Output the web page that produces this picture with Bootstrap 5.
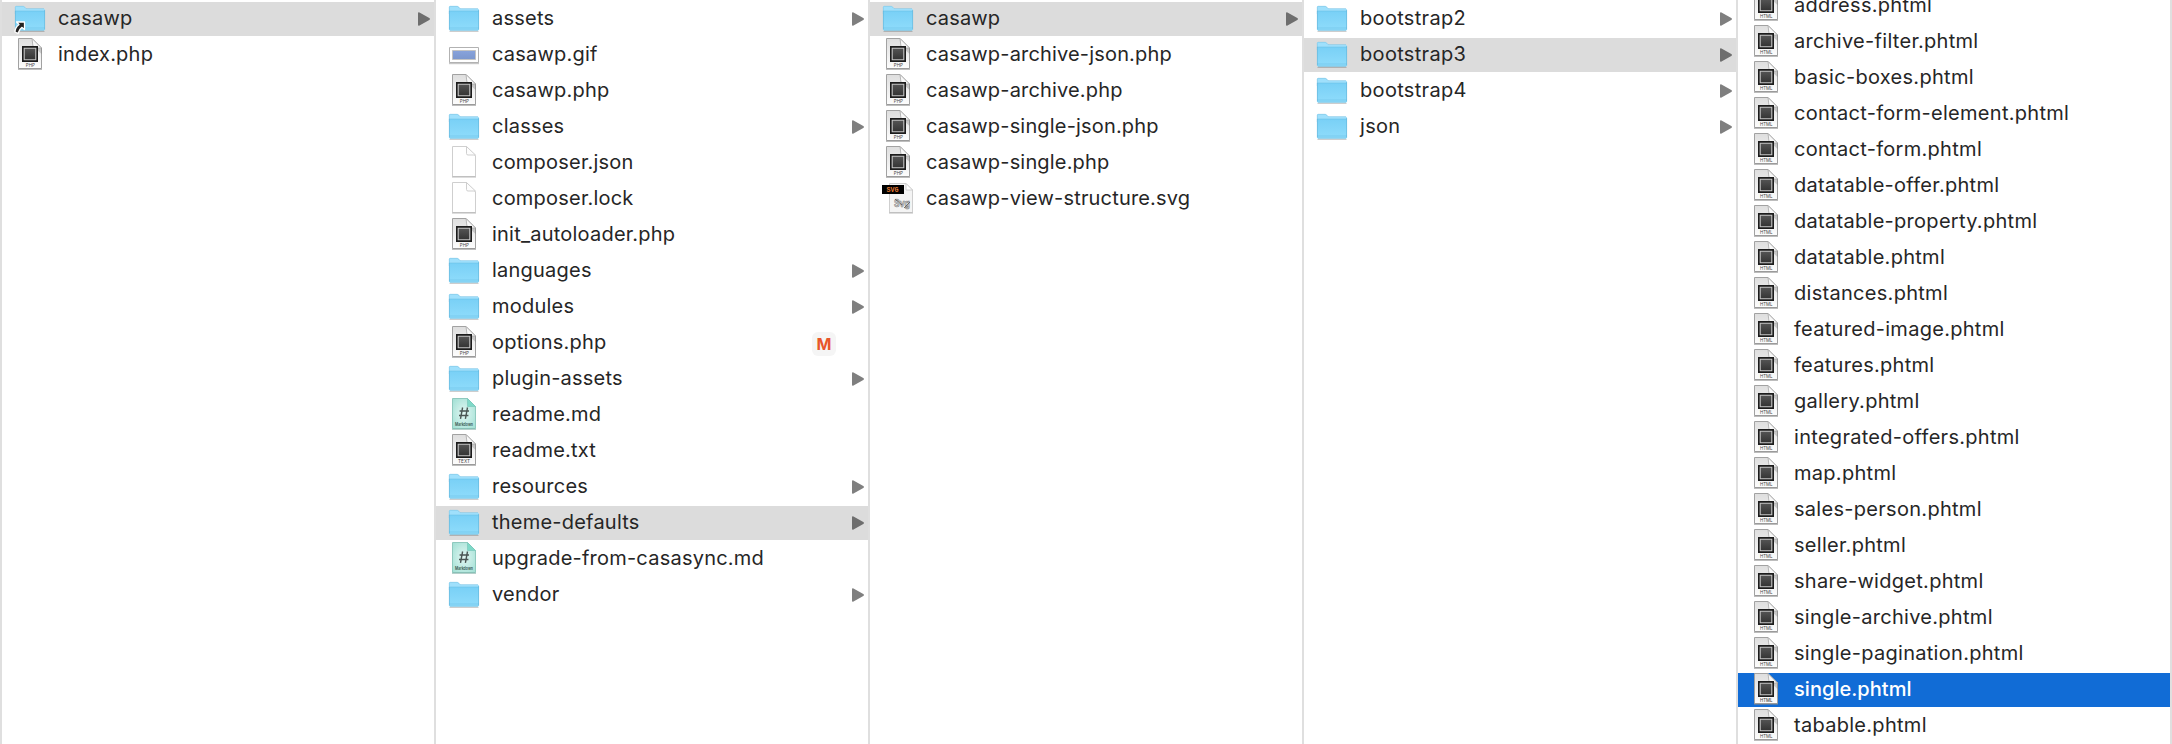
<!DOCTYPE html>
<html lang="en">
<head>
<meta charset="utf-8">
<meta name="viewport" content="width=device-width, initial-scale=1">
<title>casawp</title>
<link href="https://cdn.jsdelivr.net/npm/bootstrap@5.3.0/dist/css/bootstrap.min.css" rel="stylesheet">
<style>
  body { font-family: Inter, "Liberation Sans", sans-serif; font-size: 20px; color: #262626; background: #fff; }
  .browser { height: 744px; width: 2172px; }
  .pane { --track: .22px; width: 434px; border-left: 2px solid #dfdfdf; padding-top: 2px; display: flex; flex-direction: column; gap: 2px; flex: none; }
  .pane.templates { --track: .17px; }
  .pane.versions { --track: .32px; }
  .pane.scrolled { --track: .29px; margin-top: -13px; }
  .pane-end { width: 2px; background: #dfdfdf; }
  .entry { height: 34px; flex: none; display: flex; align-items: center; padding: 0 4px 0 11px; line-height: 32px; letter-spacing: var(--track); white-space: nowrap; }
  .entry > svg:first-child { width: 34px; height: 34px; flex: none; margin-right: 11px; overflow: visible; }
  .entry span { padding-bottom: 2px; }
  .entry .arr { width: 12px; height: 14px; margin-left: auto; flex: none; fill: #7f7f7f; }
  .entry.open { background: #dcdcdc; }
  .entry.open .arr { fill: #6e6e6e; }
  .entry.chosen { background: #116cd6; color: #fff; font-weight: 500; letter-spacing: .04px; }
  .entry .status { width: 24px; height: 24px; line-height: 24px; padding: 0; margin: 2px 28px 0 auto; border-radius: 6px; background: #f5f5f5; color: #e8562a; font-size: 16px; font-weight: 700; letter-spacing: 0; text-align: center; }
</style>
</head>
<body class="overflow-hidden">
<svg width="0" height="0" class="position-absolute" aria-hidden="true">
  <defs>
    <linearGradient id="gFolder" x1="0" y1="0" x2="0" y2="1"><stop offset="0" stop-color="#79d0f6"/><stop offset="1" stop-color="#8fdcfb"/></linearGradient>
    <linearGradient id="gPage" x1="0" y1="0" x2="0" y2="1"><stop offset="0" stop-color="#dedede"/><stop offset="1" stop-color="#fdfdfd"/></linearGradient>
    <linearGradient id="gChip" x1="0" y1="0" x2="0" y2="1"><stop offset="0" stop-color="#555"/><stop offset="1" stop-color="#333"/></linearGradient>
    <linearGradient id="gFold" x1="0" y1="1" x2="1" y2="0"><stop offset="0" stop-color="#fff"/><stop offset=".55" stop-color="#f4f4f4"/><stop offset="1" stop-color="#bbb"/></linearGradient>
    <radialGradient id="gMd" cx=".5" cy=".5" r=".7"><stop offset="0" stop-color="#e2f7f3"/><stop offset="1" stop-color="#9fdfd3"/></radialGradient>
    <linearGradient id="gImg" x1="0" y1="0" x2="0" y2="1"><stop offset="0" stop-color="#88a3dc"/><stop offset="1" stop-color="#7c97cd"/></linearGradient>
    <symbol id="folder" viewBox="0 0 34 34">
      <path d="M2.500 29.400h29" stroke="#000" stroke-opacity=".22" stroke-width="1"/>
      <path d="M2 5.200Q2 4 3.200 4H10q1 0 1.800.8l1.100 1.400q.5.6 1.500.6h16.400q1.200 0 1.200 1.200V12H2z" fill="#9fe0fc"/>
      <path d="M2.300 12V5.300Q2.300 4.300 3.300 4.300H10q.9 0 1.600.8L13 6.600h18" fill="none" stroke="#7fc5e4" stroke-width=".6"/>
      <path d="M2 9h30v18.300q0 1.200-1.200 1.200H3.200Q2 28.500 2 27.300z" fill="url(#gFolder)"/>
      <path d="M2 9h30M2 26h30" stroke="#61b9df" stroke-width=".7" opacity=".6"/>
      <path d="M2.400 9v18.500M31.600 8v19.500M3 28.200h28" stroke="#62b4d8" stroke-width=".8" opacity=".75"/>
    </symbol>
    <symbol id="page" viewBox="0 0 34 34">
      <path d="M5.500.5H19L28.500 10V30.500H5.500z" fill="url(#gPage)" stroke="#a2a2a2"/>
      <path d="M5 31.200h24" stroke="#888" stroke-width=".8"/>
      <path d="M20.500 8.500 28.500 10V16z" fill="#000" opacity=".15"/>
      <path d="M19 .5L28.500 10H22q-2-.5-2.200-3z" fill="url(#gFold)" stroke="#a8a8a8" stroke-width=".8"/>
      <path d="M9 8h16v16H9z" fill="#1c1c1c"/>
      <path d="M11.200 10.200h11.600v11.600H11.200z" fill="url(#gChip)" stroke="#c6c6c6" stroke-width="1.100"/>
    </symbol>
    <symbol id="php" viewBox="0 0 34 34"><use href="#page"/><text x="17.300" y="28.600" font-size="5.200" letter-spacing="0" text-anchor="middle" textLength="9" lengthAdjust="spacingAndGlyphs" fill="#444">PHP</text></symbol>
    <symbol id="txt" viewBox="0 0 34 34"><use href="#page"/><text x="17" y="28.600" font-size="5.200" letter-spacing="0" text-anchor="middle" textLength="12" lengthAdjust="spacingAndGlyphs" fill="#444">TEXT</text></symbol>
    <symbol id="html" viewBox="0 0 34 34"><use href="#page"/><text x="17.300" y="28.600" font-size="5.200" letter-spacing="0" text-anchor="middle" textLength="12.500" lengthAdjust="spacingAndGlyphs" fill="#444">HTML</text></symbol>
    <symbol id="md" viewBox="0 0 34 34">
      <path d="M5.500.5H20.500L28.500 8.500V30.500H5.500z" fill="url(#gMd)" stroke="#8fc9be"/>
      <path d="M5 31.200h24" stroke="#79aaa1" stroke-width=".8"/>
      <path d="M20.500.5v8h8z" fill="#7fd9c8" stroke="#75c5b7" stroke-width=".6"/>
      <path d="M15.600 9.500l-2.100 11.400M20.500 9.500l-2.100 11.400M12.600 13h9.400M12 17.500h9.400" stroke="#4b5654" stroke-width="1.400" fill="none"/>
      <text x="17" y="28.400" font-size="4.600" letter-spacing="0" font-weight="600" text-anchor="middle" textLength="18" lengthAdjust="spacingAndGlyphs" fill="#34524d">Markdown</text>
    </symbol>
    <symbol id="blank" viewBox="0 0 34 34">
      <path d="M5.500.5H19.500L28.500 10V30.500H5.500z" fill="#fff" stroke="#cfcfcf"/>
      <path d="M5 31h24" stroke="#aaa" stroke-width=".8"/>
      <path d="M19.500.5v7q0 1.500 1.500 1.500h7.500z" fill="#fdfdfd" stroke="#cacaca" stroke-width=".9"/>
    </symbol>
    <symbol id="gif" viewBox="0 0 34 34">
      <path d="M2 25.200h30" stroke="#000" stroke-opacity=".22" stroke-width="2"/>
      <path d="M2.500 9.500h29v15h-29z" fill="#fff" stroke="#b2b2b2"/>
      <path d="M5.500 12.500h23v9h-23z" fill="url(#gImg)" stroke="#c3c3c3"/>
    </symbol>
    <symbol id="svgdoc" viewBox="0 0 34 34">
      <path d="M8.500 1.500H25L31.500 8V30.500H8.500z" fill="#f4f4f4" stroke="#cfcfcf"/>
      <path d="M8 31h24" stroke="#aaa" stroke-width=".8"/>
      <path d="M25 1.500V8h6.500z" fill="#fff" stroke="#c5c5c5" stroke-width=".8"/>
      <text x="21" y="24.500" font-size="10" letter-spacing="0" font-weight="700" text-anchor="middle" textLength="16" lengthAdjust="spacingAndGlyphs" fill="#ccc" stroke="#777" stroke-width=".5">Svg</text>
      <path d="M14 17l7 6M23 26l6-6" stroke="#555" stroke-width=".8"/>
      <path d="M1 3h22v9H1z" fill="#000"/>
      <text x="11.500" y="9.900" font-size="7" letter-spacing="0" font-family="Liberation Mono, monospace" font-weight="700" text-anchor="middle" textLength="12" lengthAdjust="spacingAndGlyphs" fill="#e07a35">SVG</text>
    </symbol>
    <symbol id="alias" viewBox="0 0 34 34">
      <use href="#folder"/>
      <path d="M3.500 20H11.500V27.500L9 25.400Q6 27.500 5 31.500L2 30Q2 25.500 6 22.500z" fill="#222" stroke="#fff" stroke-width="1.300" stroke-linejoin="round"/>
    </symbol>
    <symbol id="tri" viewBox="0 0 12 14"><path d="M0 1.200Q0-.3 1.500.4L11.300 6.100Q12.600 7 11.300 7.900L1.500 13.600Q0 14.300 0 12.800z"/></symbol>
  </defs>
</svg>

<main class="browser d-flex overflow-hidden">
  <section class="pane">
    <div class="entry open"><svg><use href="#alias"/></svg><span>casawp</span><svg class="arr"><use href="#tri"/></svg></div>
    <div class="entry"><svg><use href="#php"/></svg><span>index.php</span></div>
  </section>

  <section class="pane">
    <div class="entry"><svg><use href="#folder"/></svg><span>assets</span><svg class="arr"><use href="#tri"/></svg></div>
    <div class="entry"><svg><use href="#gif"/></svg><span>casawp.gif</span></div>
    <div class="entry"><svg><use href="#php"/></svg><span>casawp.php</span></div>
    <div class="entry"><svg><use href="#folder"/></svg><span>classes</span><svg class="arr"><use href="#tri"/></svg></div>
    <div class="entry"><svg><use href="#blank"/></svg><span>composer.json</span></div>
    <div class="entry"><svg><use href="#blank"/></svg><span>composer.lock</span></div>
    <div class="entry"><svg><use href="#php"/></svg><span>init_autoloader.php</span></div>
    <div class="entry"><svg><use href="#folder"/></svg><span>languages</span><svg class="arr"><use href="#tri"/></svg></div>
    <div class="entry"><svg><use href="#folder"/></svg><span>modules</span><svg class="arr"><use href="#tri"/></svg></div>
    <div class="entry"><svg><use href="#php"/></svg><span>options.php</span><span class="status">M</span></div>
    <div class="entry"><svg><use href="#folder"/></svg><span>plugin-assets</span><svg class="arr"><use href="#tri"/></svg></div>
    <div class="entry"><svg><use href="#md"/></svg><span>readme.md</span></div>
    <div class="entry"><svg><use href="#txt"/></svg><span>readme.txt</span></div>
    <div class="entry"><svg><use href="#folder"/></svg><span>resources</span><svg class="arr"><use href="#tri"/></svg></div>
    <div class="entry open"><svg><use href="#folder"/></svg><span>theme-defaults</span><svg class="arr"><use href="#tri"/></svg></div>
    <div class="entry"><svg><use href="#md"/></svg><span>upgrade-from-casasync.md</span></div>
    <div class="entry"><svg><use href="#folder"/></svg><span>vendor</span><svg class="arr"><use href="#tri"/></svg></div>
  </section>

  <section class="pane templates">
    <div class="entry open"><svg><use href="#folder"/></svg><span>casawp</span><svg class="arr"><use href="#tri"/></svg></div>
    <div class="entry"><svg><use href="#php"/></svg><span>casawp-archive-json.php</span></div>
    <div class="entry"><svg><use href="#php"/></svg><span>casawp-archive.php</span></div>
    <div class="entry"><svg><use href="#php"/></svg><span>casawp-single-json.php</span></div>
    <div class="entry"><svg><use href="#php"/></svg><span>casawp-single.php</span></div>
    <div class="entry"><svg><use href="#svgdoc"/></svg><span>casawp-view-structure.svg</span></div>
  </section>

  <section class="pane versions">
    <div class="entry"><svg><use href="#folder"/></svg><span>bootstrap2</span><svg class="arr"><use href="#tri"/></svg></div>
    <div class="entry open"><svg><use href="#folder"/></svg><span>bootstrap3</span><svg class="arr"><use href="#tri"/></svg></div>
    <div class="entry"><svg><use href="#folder"/></svg><span>bootstrap4</span><svg class="arr"><use href="#tri"/></svg></div>
    <div class="entry"><svg><use href="#folder"/></svg><span>json</span><svg class="arr"><use href="#tri"/></svg></div>
  </section>

  <section class="pane scrolled">
    <div class="entry"><svg><use href="#html"/></svg><span>address.phtml</span></div>
    <div class="entry"><svg><use href="#html"/></svg><span>archive-filter.phtml</span></div>
    <div class="entry"><svg><use href="#html"/></svg><span>basic-boxes.phtml</span></div>
    <div class="entry"><svg><use href="#html"/></svg><span>contact-form-element.phtml</span></div>
    <div class="entry"><svg><use href="#html"/></svg><span>contact-form.phtml</span></div>
    <div class="entry"><svg><use href="#html"/></svg><span>datatable-offer.phtml</span></div>
    <div class="entry"><svg><use href="#html"/></svg><span>datatable-property.phtml</span></div>
    <div class="entry"><svg><use href="#html"/></svg><span>datatable.phtml</span></div>
    <div class="entry"><svg><use href="#html"/></svg><span>distances.phtml</span></div>
    <div class="entry"><svg><use href="#html"/></svg><span>featured-image.phtml</span></div>
    <div class="entry"><svg><use href="#html"/></svg><span>features.phtml</span></div>
    <div class="entry"><svg><use href="#html"/></svg><span>gallery.phtml</span></div>
    <div class="entry"><svg><use href="#html"/></svg><span>integrated-offers.phtml</span></div>
    <div class="entry"><svg><use href="#html"/></svg><span>map.phtml</span></div>
    <div class="entry"><svg><use href="#html"/></svg><span>sales-person.phtml</span></div>
    <div class="entry"><svg><use href="#html"/></svg><span>seller.phtml</span></div>
    <div class="entry"><svg><use href="#html"/></svg><span>share-widget.phtml</span></div>
    <div class="entry"><svg><use href="#html"/></svg><span>single-archive.phtml</span></div>
    <div class="entry"><svg><use href="#html"/></svg><span>single-pagination.phtml</span></div>
    <div class="entry chosen"><svg><use href="#html"/></svg><span>single.phtml</span></div>
    <div class="entry"><svg><use href="#html"/></svg><span>tabable.phtml</span></div>
  </section>
  <div class="pane-end"></div>
</main>
<script src="https://cdn.jsdelivr.net/npm/bootstrap@5.3.0/dist/js/bootstrap.bundle.min.js"></script>
</body>
</html>
